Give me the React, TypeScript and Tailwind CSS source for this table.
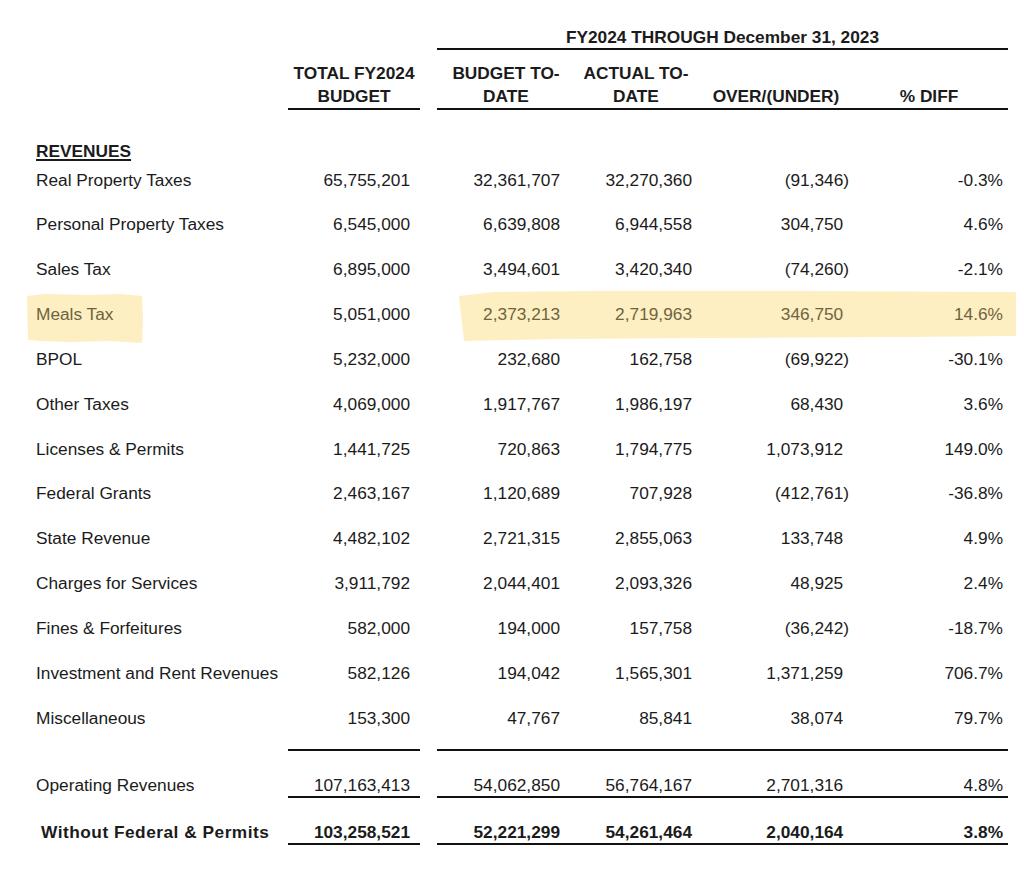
import React from "react";

type Row = [string, string, string, string, string, string];

const rows: Row[] = [
  ["Real Property Taxes", "65,755,201", "32,361,707", "32,270,360", "(91,346)", "-0.3%"],
  ["Personal Property Taxes", "6,545,000", "6,639,808", "6,944,558", "304,750", "4.6%"],
  ["Sales Tax", "6,895,000", "3,494,601", "3,420,340", "(74,260)", "-2.1%"],
  ["Meals Tax", "5,051,000", "2,373,213", "2,719,963", "346,750", "14.6%"],
  ["BPOL", "5,232,000", "232,680", "162,758", "(69,922)", "-30.1%"],
  ["Other Taxes", "4,069,000", "1,917,767", "1,986,197", "68,430", "3.6%"],
  ["Licenses & Permits", "1,441,725", "720,863", "1,794,775", "1,073,912", "149.0%"],
  ["Federal Grants", "2,463,167", "1,120,689", "707,928", "(412,761)", "-36.8%"],
  ["State Revenue", "4,482,102", "2,721,315", "2,855,063", "133,748", "4.9%"],
  ["Charges for Services", "3,911,792", "2,044,401", "2,093,326", "48,925", "2.4%"],
  ["Fines & Forfeitures", "582,000", "194,000", "157,758", "(36,242)", "-18.7%"],
  ["Investment and Rent Revenues", "582,126", "194,042", "1,565,301", "1,371,259", "706.7%"],
  ["Miscellaneous", "153,300", "47,767", "85,841", "38,074", "79.7%"],
];

function Over({ v }: { v: string }) {
  return (
    <>
      {v}
      {v.startsWith("(") ? null : <span className="invisible">)</span>}
    </>
  );
}

function DataRow({ r, hl }: { r: Row; hl?: boolean }) {
  const c = hl ? "text-[#6e6440]" : "";
  return (
    <div className="flex h-[22px] leading-[22px] relative z-10">
      <div className={`w-[252px] ${c}`}>{r[0]}</div>
      <div className="w-[132px] text-right pr-[10px]">{r[1]}</div>
      <div className="w-[17px]" />
      <div className={`w-[138px] text-right pr-[15px] ${c}`}>{r[2]}</div>
      <div className={`w-[122px] text-right pr-[5px] ${c}`}>{r[3]}</div>
      <div className={`w-[158px] text-right pr-[6px] ${c}`}>
        <Over v={r[4]} />
      </div>
      <div className={`w-[153px] text-right pr-[5px] ${c}`}>{r[5]}</div>
    </div>
  );
}

export default function App() {
  return (
    <div
      className="relative w-[1024px] h-[892px] bg-white text-[#1b1b1b] text-[17.3px] pl-[36px] pt-[26px] overflow-hidden"
      style={{ fontFamily: '"Liberation Sans", Arial, sans-serif' }}
    >
      {/* highlighter marks */}
      <svg
        className="absolute left-0 top-0 pointer-events-none"
        width="1024"
        height="892"
        viewBox="0 0 1024 892"
      >
        <polygon
          fill="#fdefc1"
          points="27,296 45,294 90,295 120,294 142,296 143,320 142,343 110,341 70,342 40,341 28,340"
        />
        <polygon
          fill="#fdefc1"
          points="459,296 494,292 600,291 800,291 1016,292 1016,336 900,337 700,338 560,339 464,341"
        />
      </svg>

      {/* title row */}
      <div className="flex">
        <div className="w-[401px]" />
        <div className="w-[571px] h-[23.5px] leading-[22px] text-center font-bold border-b-[2.5px] border-[#111]">
          FY2024 THROUGH December 31, 2023
        </div>
      </div>

      {/* column headers */}
      <div className="flex mt-[12px] font-bold leading-[23px]">
        <div className="w-[252px]" />
        <div className="w-[132px] h-[48.5px] text-center border-b-[2.5px] border-[#111]">
          TOTAL FY2024
          <br />
          BUDGET
        </div>
        <div className="w-[17px]" />
        <div className="flex border-b-[2.5px] border-[#111] h-[48.5px]">
          <div className="w-[138px] text-center">
            BUDGET TO-
            <br />
            DATE
          </div>
          <div className="w-[122px] text-center">
            ACTUAL TO-
            <br />
            DATE
          </div>
          <div className="w-[158px] flex flex-col justify-end text-center">
            OVER/(UNDER)
          </div>
          <div className="w-[153px] flex flex-col justify-end text-center pr-[5px]">
            % DIFF
          </div>
        </div>
      </div>

      {/* section title */}
      <div className="mt-[30px] h-[22px] leading-[22px] font-bold underline decoration-[1.5px] underline-offset-[2px]">
        REVENUES
      </div>

      {/* data rows */}
      <div className="mt-[6.5px] flex flex-col gap-[22.85px]">
        {rows.map((r) => (
          <DataRow key={r[0]} r={r} hl={r[0] === "Meals Tax"} />
        ))}
      </div>

      {/* totals */}
      <div className="flex mt-[20px]">
        <div className="w-[252px]" />
        <div className="w-[132px] border-t-2 border-[#111]" />
        <div className="w-[17px]" />
        <div className="w-[571px] border-t-2 border-[#111]" />
      </div>
      <div className="flex mt-[23px] leading-[22px]">
        <div className="w-[252px]">Operating Revenues</div>
        <div className="w-[132px] text-right pr-[10px] border-b-2 border-[#111]">107,163,413</div>
        <div className="w-[17px]" />
        <div className="flex border-b-2 border-[#111]">
          <div className="w-[138px] text-right pr-[15px]">54,062,850</div>
          <div className="w-[122px] text-right pr-[5px]">56,764,167</div>
          <div className="w-[158px] text-right pr-[6px]">
            <Over v="2,701,316" />
          </div>
          <div className="w-[153px] text-right pr-[5px]">4.8%</div>
        </div>
      </div>
      <div className="flex mt-[23px] leading-[22px] font-bold">
        <div className="w-[252px] pl-[5px] tracking-[0.5px]">Without Federal &amp; Permits</div>
        <div className="w-[132px] text-right pr-[10px] border-b-2 border-[#111]">103,258,521</div>
        <div className="w-[17px]" />
        <div className="flex border-b-2 border-[#111]">
          <div className="w-[138px] text-right pr-[15px]">52,221,299</div>
          <div className="w-[122px] text-right pr-[5px]">54,261,464</div>
          <div className="w-[158px] text-right pr-[6px]">
            <Over v="2,040,164" />
          </div>
          <div className="w-[153px] text-right pr-[5px]">3.8%</div>
        </div>
      </div>
    </div>
  );
}
